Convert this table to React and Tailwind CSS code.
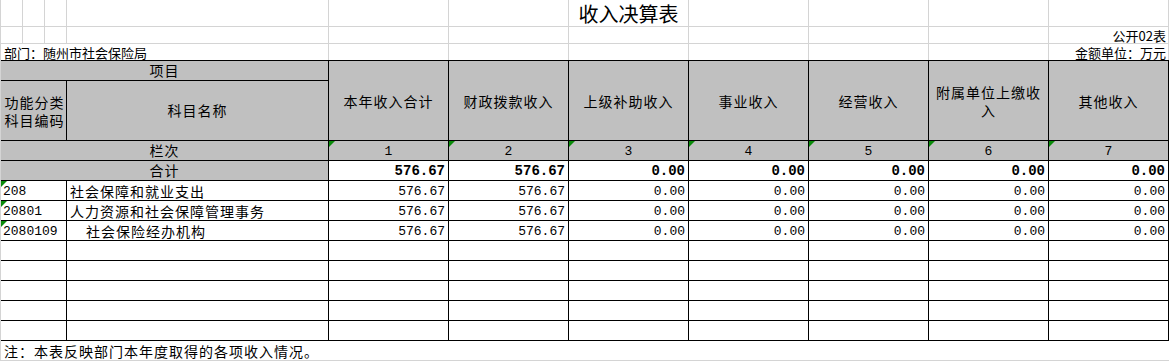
const CJK = { fontFamily: '"Noto Sans CJK SC", "Noto Sans", sans-serif' };

// green "text-number" marker Excel puts in the corner of a cell
const Mark = () => (
  <svg className="absolute left-0 top-0" width="6" height="6" viewBox="0 0 6 6">
    <path d="M0 0H6L0 6Z" fill="#0a8a0a" />
  </svg>
);

const heads = ["本年收入合计", "财政拨款收入", "上级补助收入", "事业收入", "经营收入", null, "其他收入"];

const totals = ["576.67", "576.67", "0.00", "0.00", "0.00", "0.00", "0.00"];

const rows = [
  { code: "208", name: "社会保障和就业支出", vals: totals },
  { code: "20801", name: "人力资源和社会保障管理事务", vals: totals },
  { code: "2080109", name: "社会保险经办机构", indent: true, vals: totals },
];

const TopRow = ({ h, children, last }) => (
  <div className={`flex ${h} ${last ? "" : "border-b border-[#d4d4d4]"}`}>{children}</div>
);

const GCell = ({ w, className = "", children }) => (
  <div className={`${w} shrink-0 border-r border-[#d4d4d4] relative ${className}`}>{children}</div>
);

const NumCell = ({ v, bold }) => (
  <div
    className={`w-[120px] shrink-0 border-r border-b border-black flex items-center justify-end pr-[3px] pt-[2px] ${
      bold ? "font-bold text-[14px]" : "text-[13px]"
    }`}
    style={{ fontFamily: '"Liberation Mono", monospace' }}
  >
    {v}
  </div>
);

export default function App() {
  const empty = Array.from({ length: 5 });

  return (
    <div className="w-[1169px] h-[361px] bg-white text-black border-l border-[#d4d4d4] overflow-hidden" style={CJK}>
      {/* title rows */}
      <TopRow h="h-[27px]">
        <GCell w="w-[22px]" />
        <GCell w="w-[22px]" />
        <GCell w="w-[22px]" />
        <GCell w="w-[262px]" />
        <GCell w="w-[120px]" />
        <GCell w="w-[120px]" />
        <GCell w="w-[120px]" className="flex items-end justify-center pb-[1px]">
          <span className="text-[20px] leading-[22px] whitespace-nowrap">收入决算表</span>
        </GCell>
        <GCell w="w-[120px]" />
        <GCell w="w-[120px]" />
        <GCell w="w-[120px]" />
        <GCell w="w-[120px]" />
      </TopRow>
      <TopRow h="h-[17px]">
        <GCell w="w-[22px]" />
        <GCell w="w-[22px]" />
        <GCell w="w-[22px]" />
        <GCell w="w-[262px]" />
        <GCell w="w-[120px]" />
        <GCell w="w-[120px]" />
        <GCell w="w-[120px]" />
        <GCell w="w-[120px]" />
        <GCell w="w-[120px]" />
        <GCell w="w-[120px]" />
        <GCell w="w-[120px]" className="flex items-center justify-end pr-[2px] text-[13px] leading-none">
          公开02表
        </GCell>
      </TopRow>
      <TopRow h="h-[16px]" last>
        <GCell w="w-[328px]" className="flex items-center pl-[3px] text-[13px] leading-none whitespace-nowrap">
          部门：随州市社会保险局
        </GCell>
        <GCell w="w-[120px]" />
        <GCell w="w-[120px]" />
        <GCell w="w-[120px]" />
        <GCell w="w-[120px]" />
        <GCell w="w-[120px]" />
        <GCell w="w-[120px]" />
        <GCell w="w-[120px]" className="flex items-center justify-end pr-[2px] text-[13px] leading-none whitespace-nowrap">
          金额单位：万元
        </GCell>
      </TopRow>

      {/* header block */}
      <div className="grid grid-cols-[66px_262px_repeat(7,120px)] grid-rows-[20px_60px] border-t border-black bg-[#c0c0c0] text-[14px] tracking-[1px]">
        <div className="col-span-2 border-r border-b border-black flex items-center justify-center">项目</div>
        {heads.map((h, i) => (
          <div
            key={i}
            className="row-span-2 border-r border-b border-black flex items-center justify-center text-center leading-[18px]"
          >
            {h ?? (
              <span>
                附属单位上缴收
                <br />入
              </span>
            )}
          </div>
        ))}
        <div className="border-r border-b border-black flex items-center justify-center text-center leading-[18px] pl-[2px]">
          功能分类
          <br />
          科目编码
        </div>
        <div className="border-r border-b border-black flex items-center justify-center">科目名称</div>
      </div>

      {/* 栏次 */}
      <div className="flex h-[20px]">
        <div className="w-[328px] shrink-0 border-r border-b border-black bg-[#c0c0c0] flex items-center justify-center text-[14px] tracking-[1px]">
          栏次
        </div>
        {[1, 2, 3, 4, 5, 6, 7].map((n) => (
          <div
            key={n}
            className="relative w-[120px] shrink-0 border-r border-b border-black bg-[#c0c0c0] flex items-center justify-center pt-[2px] text-[13px]"
            style={{ fontFamily: '"Liberation Mono", monospace' }}
          >
            <Mark />
            {n}
          </div>
        ))}
      </div>

      {/* 合计 */}
      <div className="flex h-[20px]">
        <div className="w-[328px] shrink-0 border-r border-b border-black bg-[#c0c0c0] flex items-center justify-center text-[14px] tracking-[1px]">
          合计
        </div>
        {totals.map((v, i) => (
          <NumCell key={i} v={v} bold />
        ))}
      </div>

      {/* data rows */}
      {rows.map((r) => (
        <div key={r.code} className="flex h-[20px]">
          <div
            className="relative w-[66px] shrink-0 border-r border-b border-black flex items-center pl-[2px] pt-[2px] text-[13px]"
            style={{ fontFamily: '"Liberation Mono", monospace' }}
          >
            <Mark />
            {r.code}
          </div>
          <div
            className={`w-[262px] shrink-0 border-r border-b border-black flex items-center pt-[1px] text-[14px] tracking-[1px] whitespace-nowrap ${
              r.indent ? "pl-[19px]" : "pl-[3px]"
            }`}
          >
            {r.name}
          </div>
          {r.vals.map((v, i) => (
            <NumCell key={i} v={v} />
          ))}
        </div>
      ))}

      {empty.map((_, k) => (
        <div key={k} className="flex h-[20px]">
          <div className="w-[66px] shrink-0 border-r border-b border-black" />
          <div className="w-[262px] shrink-0 border-r border-b border-black" />
          {[0, 1, 2, 3, 4, 5, 6].map((i) => (
            <div key={i} className="w-[120px] shrink-0 border-r border-b border-black" />
          ))}
        </div>
      ))}

      {/* note */}
      <div className="h-[20px] border-b border-[#d4d4d4] flex items-center pl-[3px] pt-[1px] text-[14px] tracking-[1px] whitespace-nowrap">
        注：本表反映部门本年度取得的各项收入情况。
      </div>
    </div>
  );
}
